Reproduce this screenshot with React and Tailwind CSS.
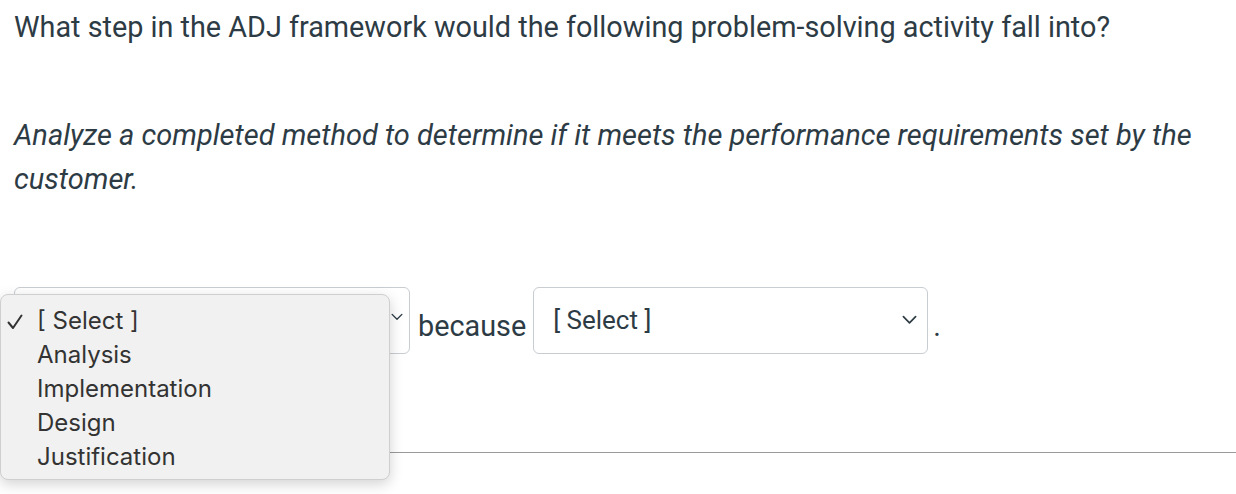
import React from "react";

function Chevron({ className }) {
  return (
    <svg className={className} viewBox="0 0 16 10" fill="none">
      <path d="M1.5 1.5 L8 8 L14.5 1.5" stroke="currentColor" strokeWidth="1.8" strokeLinecap="round" strokeLinejoin="round" />
    </svg>
  );
}

export default function App() {
  const items = ["[ Select ]", "Analysis", "Implementation", "Design", "Justification"];
  return (
    <div className="w-[1236px] h-[494px] bg-white overflow-hidden text-[#2d3b45]" style={{ fontFamily: "Roboto, 'Liberation Sans', sans-serif" }}>
      <div className="pl-[14px] pt-[7px]">
        <p className="text-[28.8px] leading-[40px] m-0">
          What step in the ADJ framework would the following problem-solving activity fall into?
        </p>
        <p className="mt-[66px] text-[29px] leading-[44px] italic pr-[20px]">
          Analyze a completed method to determine if it meets the performance requirements set by the customer.
        </p>
        <div className="relative mt-[86px] flex items-center h-[67px]">
          <div className="w-[396px] h-[67px] border border-[#c7cdd1] rounded-[6px] flex items-center justify-end pr-[6px]">
            <Chevron className="w-[12px] h-[8px] text-[#2d3b45] -mt-[8px]" />
          </div>
          <span className="ml-[8px] text-[28.8px] leading-[40px] mt-[10px]">because</span>
          <div className="ml-[7px] w-[395px] h-[67px] border border-[#c7cdd1] rounded-[6px] flex items-center justify-between pl-[19px] pr-[10px]">
            <span className="text-[26px] leading-[30px] -mt-[1px]">[ Select ]</span>
            <Chevron className="w-[15px] h-[10px] text-[#2d3b45] -mt-[2px]" />
          </div>
          <span className="ml-[5px] text-[28.8px] leading-[40px] mt-[10px]">.</span>

          <div className="absolute left-[-14px] top-[7px] w-[390px] h-[186px] bg-[#f1f1f1] border border-[#cfcfcf] rounded-[8px] shadow-[0_4px_14px_rgba(0,0,0,0.18)] pt-[9px]" style={{ fontFamily: "Inter, 'Noto Sans', sans-serif" }}>
            {items.map((t, i) => (
              <div key={t} className="relative h-[34px] flex items-center pl-[36px] text-[24px] text-[#333333]">
                {i === 0 && (
                  <svg className="absolute left-[6px] top-[10px] w-[16px] h-[16px]" viewBox="0 0 16 16" fill="none">
                    <path d="M1.5 8.5 L6 14 L14.5 1.5" stroke="#333333" strokeWidth="2" strokeLinecap="round" strokeLinejoin="round" />
                  </svg>
                )}
                {t}
              </div>
            ))}
          </div>
        </div>
      </div>
      <div className="mt-[98px] ml-[14px] h-[1px] bg-[#9a9a9a]" />
    </div>
  );
}
